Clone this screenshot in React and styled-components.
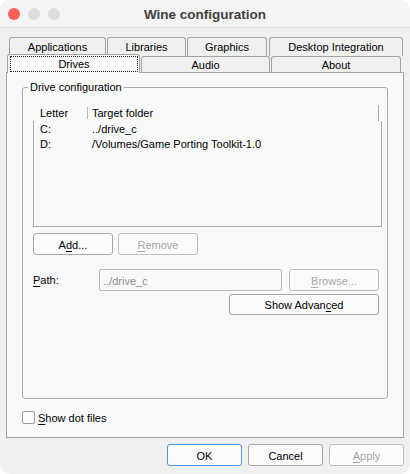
import React from 'react';
import styled, { createGlobalStyle } from 'styled-components';

const Global = createGlobalStyle`
  html, body { margin: 0; padding: 0; background: #ffffff; }
  body {
    font-family: "Liberation Sans", Arial, sans-serif;
    font-size: 11px;
    color: #000;
  }
  * { box-sizing: border-box; }
`;

const Window = styled.div`
  width: 410px;
  height: 474px;
  background: #f0f0f0;
  border-radius: 10px;
  overflow: hidden;
  display: flex;
  flex-direction: column;
`;

const TitleBar = styled.div`
  height: 28px;
  flex: none;
  display: grid;
  grid-template-columns: 1fr auto 1fr;
  align-items: center;
  background: #f4f4f4;
  border-bottom: 1px solid #dedede;
`;

const Lights = styled.div`
  display: flex;
  gap: 8px;
  padding-left: 8px;
`;

const Light = styled.span`
  width: 12px;
  height: 12px;
  border-radius: 50%;
  background: ${p => p.$color};
`;

const Title = styled.div`
  font-weight: bold;
  font-size: 13.5px;
  color: #404040;
  padding-top: 1px;
`;

const Content = styled.div`
  padding: 9px 6px 0;
  display: flex;
  flex-direction: column;
`;

const TabRow = styled.div`
  display: flex;
  align-items: flex-end;
  height: ${p => p.$h}px;
  padding-left: ${p => p.$pad}px;
`;

const Tab = styled.div`
  width: ${p => p.$w}px;
  height: 100%;
  margin-right: ${p => p.$gap ?? 1}px;
  border: 1px solid #a3a3a3;
  border-bottom: none;
  border-radius: 3px 3px 0 0;
  background: #f0f0f0;
  display: flex;
  align-items: center;
  justify-content: center;
  white-space: nowrap;
`;

const ActiveTab = styled(Tab)`
  height: 19px;
  margin-top: -2px;
  margin-bottom: -1px;
  background: #f9f9f9;
  position: relative;
  z-index: 1;
  padding: 1px 1px 1px 2px;
`;

const FocusRing = styled.span`
  flex: 1;
  align-self: stretch;
  border: 1px dotted #202020;
  display: flex;
  align-items: center;
  justify-content: center;
`;

const Panel = styled.div`
  height: 366px;
  border: 1px solid #a3a3a3;
  background: #f9f9f9;
  display: flex;
  flex-direction: column;
  padding: 8px 15px 0;
`;

const Group = styled.fieldset`
  flex: 1;
  min-height: 0;
  min-width: 0;
  margin: 0;
  padding: 0;
  border: 1px solid #ababab;
  border-radius: 3px;
`;

const Legend = styled.legend`
  margin-left: 5px;
  padding: 0 2px;
  line-height: 13px;
  font-size: 11px;
`;

const GroupBody = styled.div`
  padding: 11px 5px 0 10px;
  display: flex;
  flex-direction: column;
`;

const ListHeader = styled.div`
  display: flex;
  align-items: center;
  height: 16px;
  margin-right: 3px;
  border-right: 1px solid #ababab;
`;

const HeaderCell = styled.div`
  width: ${p => (p.$w ? `${p.$w}px` : 'auto')};
  flex: ${p => (p.$w ? 'none' : 1)};
  padding-left: ${p => p.$pad}px;
  height: 100%;
  display: flex;
  align-items: center;
`;

const HeaderDivider = styled.span`
  width: 1px;
  height: 12px;
  background: #b4b4b4;
`;

const ListBody = styled.div`
  height: 106px;
  border: 1px solid #ababab;
  border-top: none;
`;

const Row = styled.div`
  display: flex;
  height: 15px;
  align-items: center;
  padding-top: 1px;
`;

const Cell = styled.div`
  width: ${p => (p.$w ? `${p.$w}px` : 'auto')};
  flex: ${p => (p.$w ? 'none' : 1)};
  padding-left: ${p => p.$pad}px;
  white-space: nowrap;
`;

const ButtonRow = styled.div`
  display: flex;
  gap: ${p => p.$gap}px;
  margin-top: ${p => p.$mt}px;
  justify-content: ${p => p.$justify || 'flex-start'};
  padding-right: ${p => p.$pr || 0}px;
  align-items: center;
`;

const Button = styled.div`
  width: ${p => p.$w}px;
  height: ${p => p.$h || 22}px;
  flex: none;
  border: 1px solid ${p => (p.$focus ? '#4a95ea' : p.$disabled ? '#bdbdbd' : '#a6a6a6')};
  border-radius: 3px;
  background: #fbfbfb;
  color: ${p => (p.$disabled ? '#a6a6a6' : '#000')};
  display: flex;
  align-items: center;
  justify-content: center;
  padding-top: 1px;
  white-space: nowrap;
`;

const Key = styled.u`
  text-decoration: underline;
  text-underline-offset: 2px;
`;

const FieldLabel = styled.div`
  width: 66px;
  flex: none;
  margin-right: -7px;
`;

const PathInput = styled.div`
  width: 183px;
  height: 22px;
  flex: none;
  border: 1px solid #b8b8b8;
  border-radius: 2px;
  background: #f9f9f9;
  color: #8e8e8e;
  display: flex;
  align-items: center;
  padding: 1px 0 0 3px;
`;

const CheckRow = styled.div`
  display: flex;
  align-items: center;
  gap: 3px;
  margin: 12px 0 13px;
  height: 13px;
`;

const CheckBox = styled.span`
  width: 13px;
  height: 13px;
  border: 1px solid #9a9a9a;
  border-radius: 2px;
  background: #fcfcfc;
`;

const Footer = styled.div`
  display: flex;
  justify-content: flex-end;
  gap: 6px;
  padding: 6px 6px 0;
`;

const backTabs = [
  { label: 'Applications', w: 97, gap: 1 },
  { label: 'Libraries', w: 79, gap: 1 },
  { label: 'Graphics', w: 80, gap: 2 },
  { label: 'Desktop Integration', w: 134, gap: 0 },
];

const drives = [
  { letter: 'C:', path: '../drive_c' },
  { letter: 'D:', path: '/Volumes/Game Porting Toolkit-1.0' },
];

export default function App() {
  return (
    <>
      <Global />
      <Window>
        <TitleBar>
          <Lights>
            <Light $color="#fe5f57" />
            <Light $color="#dcdcdc" />
            <Light $color="#dcdcdc" />
          </Lights>
          <Title>Wine configuration</Title>
          <div />
        </TitleBar>
        <Content>
          <TabRow $h={19} $pad={3}>
            {backTabs.map(t => (
              <Tab key={t.label} $w={t.w} $gap={t.gap}>{t.label}</Tab>
            ))}
          </TabRow>
          <TabRow $h={16} $pad={1}>
            <ActiveTab $w={133} $gap={1}>
              <FocusRing>Drives</FocusRing>
            </ActiveTab>
            <Tab $w={129} $gap={1}>Audio</Tab>
            <Tab $w={130} $gap={0}>About</Tab>
          </TabRow>
          <Panel>
            <Group>
              <Legend>Drive configuration</Legend>
              <GroupBody>
                <ListHeader>
                  <HeaderCell $w={54} $pad={7}>Letter</HeaderCell>
                  <HeaderDivider />
                  <HeaderCell $pad={4}>Target folder</HeaderCell>
                </ListHeader>
                <ListBody>
                  {drives.map(d => (
                    <Row key={d.letter}>
                      <Cell $w={58} $pad={6}>{d.letter}</Cell>
                      <Cell>{d.path}</Cell>
                    </Row>
                  ))}
                </ListBody>
                <ButtonRow $gap={5} $mt={6}>
                  <Button $w={80}>A<Key>d</Key>d...</Button>
                  <Button $w={80} $disabled><Key>R</Key>emove</Button>
                </ButtonRow>
                <ButtonRow $gap={7} $mt={14}>
                  <FieldLabel><Key>P</Key>ath:</FieldLabel>
                  <PathInput>../drive_c</PathInput>
                  <Button $w={90} $disabled><Key>B</Key>rowse...</Button>
                </ButtonRow>
                <ButtonRow $gap={0} $mt={3} $justify="flex-end" $pr={3}>
                  <Button $w={150} $h={21}>Show Advan<Key>c</Key>ed</Button>
                </ButtonRow>
              </GroupBody>
            </Group>
            <CheckRow>
              <CheckBox />
              <span><Key>S</Key>how dot files</span>
            </CheckRow>
          </Panel>
        </Content>
        <Footer>
          <Button $w={75} $focus>OK</Button>
          <Button $w={75}>Cancel</Button>
          <Button $w={75} $disabled><Key>A</Key>pply</Button>
        </Footer>
      </Window>
    </>
  );
}
